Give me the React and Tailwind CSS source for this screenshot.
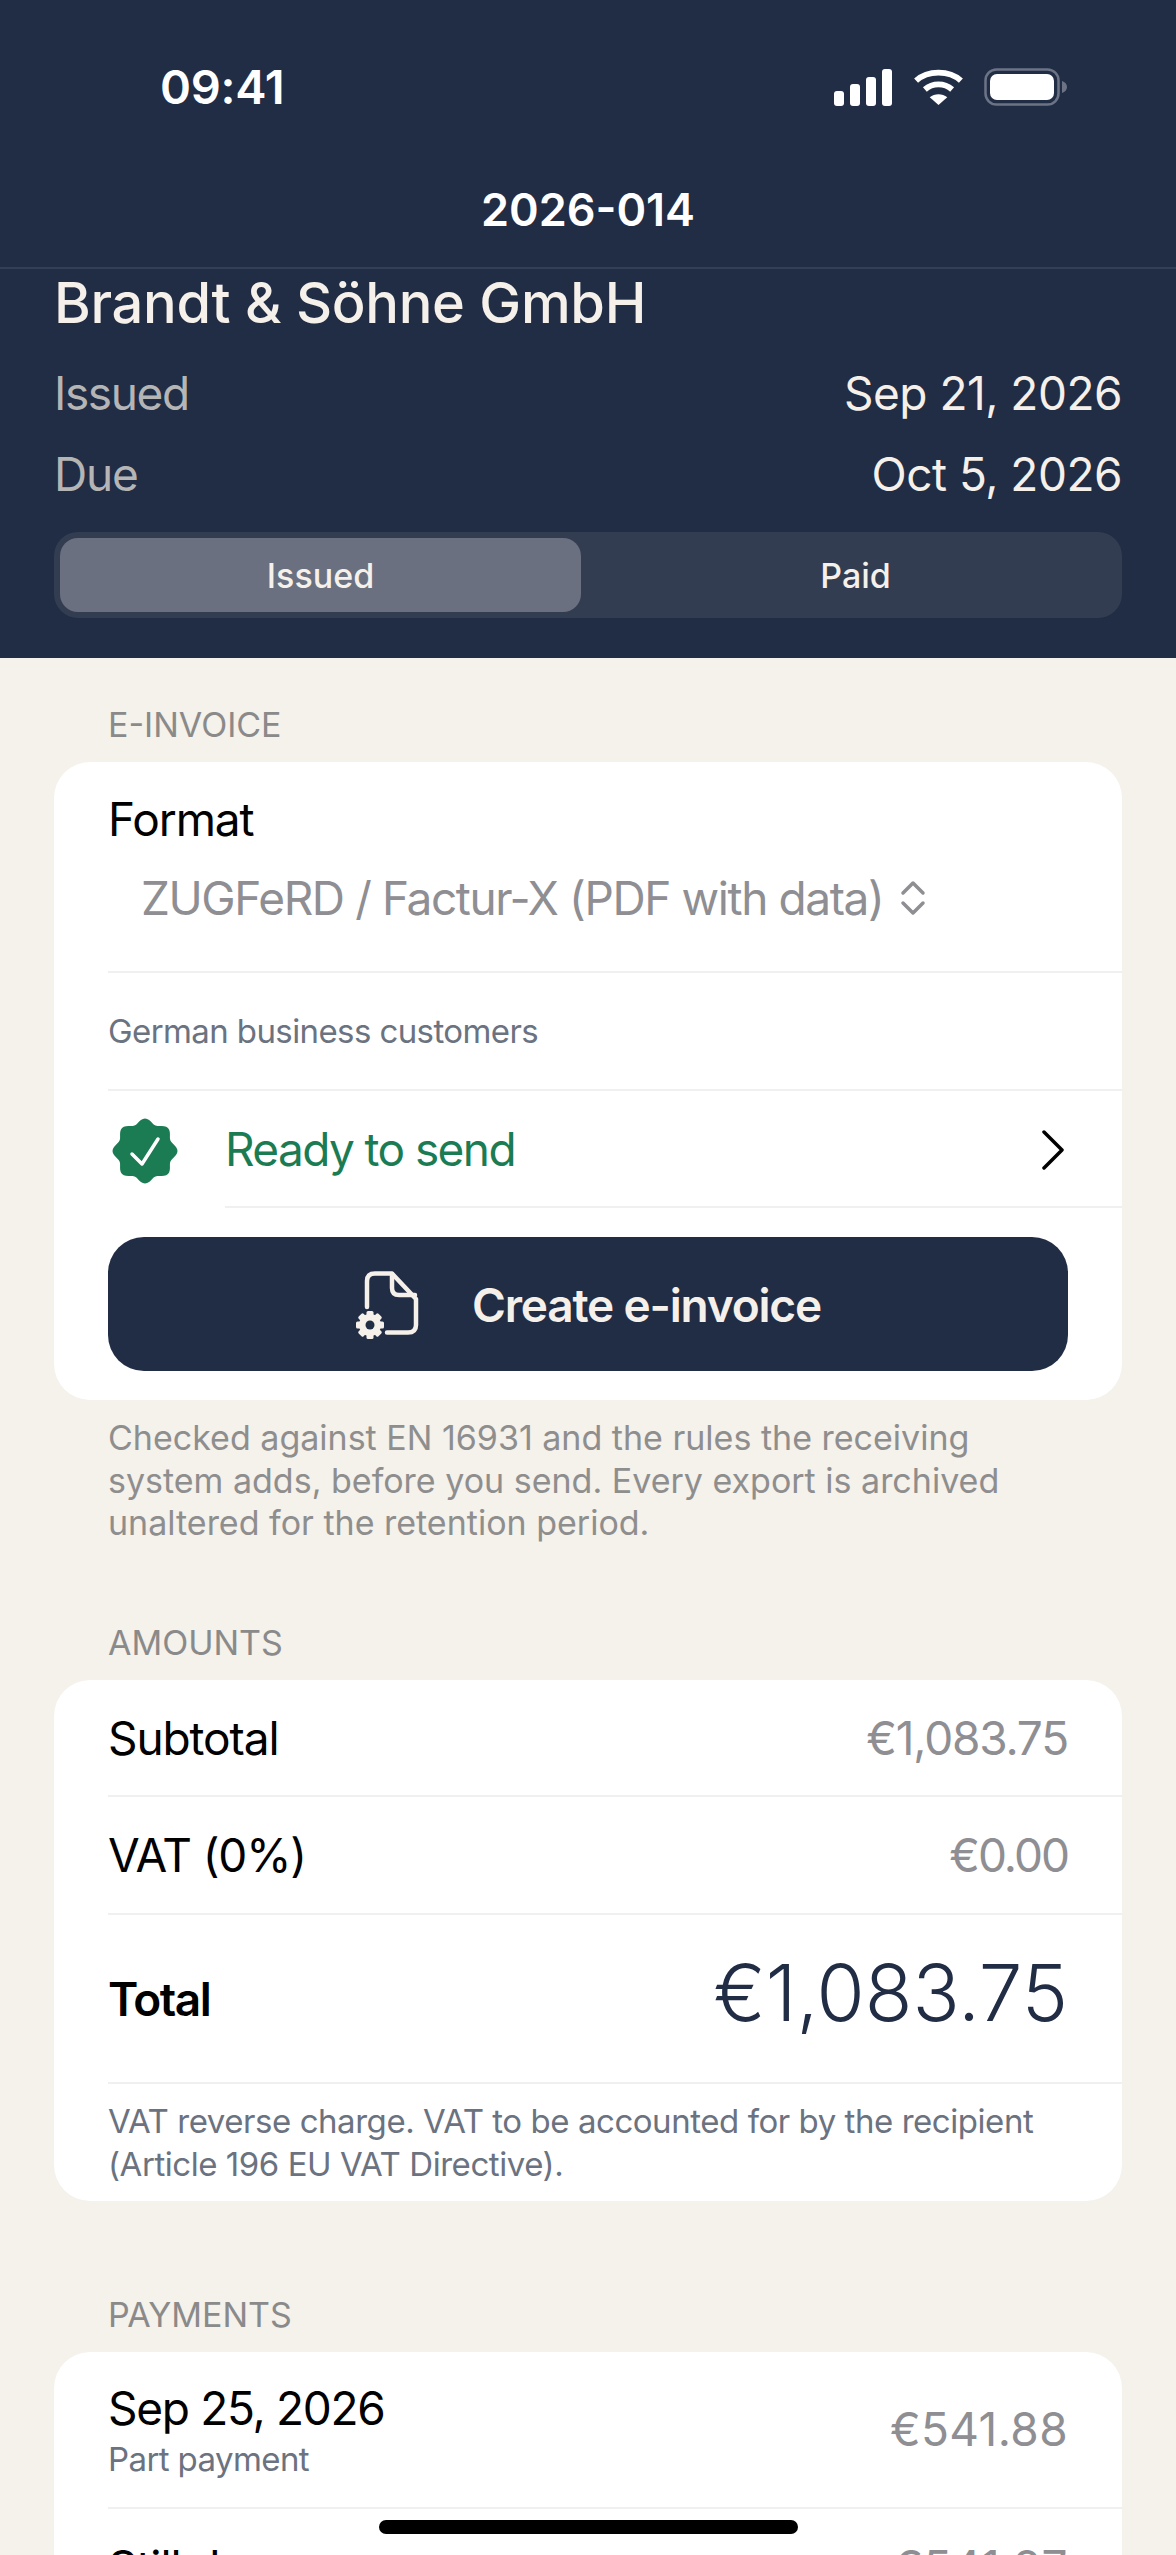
import React from "react";

const scallop = () => {
  const pts = [];
  for (let i = 0; i < 96; i++) {
    const a = (i / 96) * Math.PI * 2;
    const r = 30 + 2.5 * Math.cos(8 * a);
    pts.push(`${(33 + r * Math.sin(a)).toFixed(2)},${(33 - r * Math.cos(a)).toFixed(2)}`);
  }
  return pts.join(" ");
};

const StatusIcons = () => (
  <div className="flex items-center gap-[20px]">
    <svg width="59" height="37" viewBox="0 0 59 37" fill="#fff">
      <rect x="0" y="22" width="10" height="15" rx="3" />
      <rect x="16" y="15" width="10" height="22" rx="3" />
      <rect x="32" y="8" width="10" height="29" rx="3" />
      <rect x="48" y="0" width="10" height="37" rx="3" />
    </svg>
    <svg width="51" height="37" viewBox="0 0 52 38" fill="none">
      <path d="M3 12 C15 1 37 1 49 12" stroke="#fff" strokeWidth="6" />
      <path d="M12 21 C20 14 32 14 40 21" stroke="#fff" strokeWidth="6" />
      <path d="M26 37 L17 29 C22 25 30 25 35 29 Z" fill="#fff" />
    </svg>
    <svg width="84" height="38" viewBox="0 0 84 38" fill="none">
      <rect x="1.5" y="1.5" width="73" height="35" rx="11" stroke="#6b7385" strokeWidth="2.5" />
      <rect x="6" y="6" width="64" height="26" rx="7" fill="#fff" />
      <path d="M78 13 C81 14 83 16 83 19 C83 22 81 24 78 25 Z" fill="#6b7385" />
    </svg>
  </div>
);

const DocGear = () => (
  <svg width="70" height="80" viewBox="0 0 70 80" fill="none" className="shrink-0">
    <path
      d="M18 43 V17 C18 12 21 9.5 26 9.5 H43 L67 35 V61 C67 66 64 68.5 59 68.5 H38"
      stroke="#f5f0ea"
      strokeWidth="4.5"
      strokeLinejoin="round"
      strokeLinecap="round"
    />
    <path
      d="M43 10 V24 C43 28 45 31 50 31 H66"
      stroke="#f5f0ea"
      strokeWidth="4.5"
      strokeLinecap="round"
    />
    <g fill="#f5f0ea">
      {[0, 45, 90, 135, 180, 225, 270, 315].map((deg) => (
        <rect key={deg} x="17.5" y="47" width="7" height="8" rx="1.5" transform={`rotate(${deg} 21 61)`} />
      ))}
      <circle cx="21" cy="61" r="11" />
    </g>
    <circle cx="21" cy="61" r="4.5" fill="#212c45" />
  </svg>
);

const Row = ({ label, value, valueClass, className = "h-[117px]" }) => (
  <div className={`flex items-center justify-between border-b-2 border-[#f0f0f2] pt-[2px] pr-[54px] ${className}`}>
    <span className="text-[46px] tracking-[-1.1px] text-black">{label}</span>
    <span className={`text-[46px] text-[#8e8e93] ${valueClass}`}>{value}</span>
  </div>
);

const SectionLabel = ({ children, className = "" }) => (
  <div className={`mb-[17px] ml-[108px] h-[40px] text-[34px] leading-[40px] text-[#8a8a8a] ${className}`}>
    {children}
  </div>
);

export default function App() {
  return (
    <div className="relative h-[2555px] w-[1176px] overflow-hidden bg-[#f5f1eb] font-['Inter',sans-serif]">
      {/* Header */}
      <div className="h-[658px] bg-[#212c45] text-[#f5f0ea]">
        <div className="flex h-[174px] items-center justify-between pl-[160px] pr-[108px]">
          <span className="text-[47px] font-semibold tracking-[-0.3px] text-white">09:41</span>
          <StatusIcons />
        </div>
        <div className="flex h-[95px] justify-center border-b-2 border-[#343f57] pt-[13px]">
          <span className="text-[45px] leading-[46px] font-semibold text-white">2026-014</span>
        </div>
        <div className="px-[54px]">
          <div className="h-[68px] text-[56px] leading-[68px] font-medium tracking-[-0.3px]">Brandt &amp; Söhne GmbH</div>
          <div className="mt-[16px] flex h-[81px] items-center justify-between text-[46px] tracking-[-0.5px]">
            <span className="tracking-[-1.4px] text-[#b5b5b5]">Issued</span>
            <span>Sep 21, 2026</span>
          </div>
          <div className="flex h-[81px] items-center justify-between text-[46px] tracking-[-0.5px]">
            <span className="tracking-[-1.2px] text-[#b5b5b5]">Due</span>
            <span>Oct 5, 2026</span>
          </div>
          <div className="mt-[17px] flex h-[86px] rounded-[24px] bg-[#333d51] p-[6px] text-[34px] font-medium">
            <div className="flex w-[521px] items-center justify-center rounded-[18px] bg-[#6a7080]">Issued</div>
            <div className="flex flex-1 items-center justify-center pl-[14px]">Paid</div>
          </div>
        </div>
      </div>

      {/* E-invoice */}
      <SectionLabel className="mt-[47px]">E-INVOICE</SectionLabel>
      <div className="mx-[54px] h-[638px] rounded-[36px] bg-white">
        <div className="ml-[54px] h-[211px] border-b-2 border-[#f0f0f2] pt-[28px]">
          <div className="h-[58px] text-[46px] leading-[58px] tracking-[-1.1px] text-black">Format</div>
          <div className="mt-[21px] flex h-[58px] items-center gap-[17px] pl-[33px] text-[46px] tracking-[-1.4px] text-[#8e8e93]">
            <span>ZUGFeRD / Factur-X (PDF with data)</span>
            <svg width="26" height="36" viewBox="0 0 26 36" fill="none" stroke="#8e8e93" strokeWidth="3.5" strokeLinecap="round" strokeLinejoin="round">
              <path d="M3 13 L13 3 L23 13" />
              <path d="M3 23 L13 33 L23 23" />
            </svg>
          </div>
        </div>
        <div className="ml-[54px] flex h-[118px] items-center border-b-2 border-[#f0f0f2] pt-[2px] text-[33px] tracking-[-0.6px] text-[#6b7280]">
          German business customers
        </div>
        <div className="flex h-[117px] pl-[58px]">
          <svg width="66" height="66" viewBox="0 0 66 66" className="mt-[27px] shrink-0">
            <polygon points={scallop()} fill="#1b7c53" />
            <path d="M20 36 L30 46 L46 21" fill="none" stroke="#fff" strokeWidth="3.5" strokeLinecap="round" strokeLinejoin="round" />
          </svg>
          <div className="ml-[47px] flex flex-1 items-center justify-between border-b-2 border-[#f0f0f2] pt-[2px] pr-[58px]">
            <span className="text-[46px] tracking-[-1.6px] text-[#1b7c53]">Ready to send</span>
            <svg width="22" height="40" viewBox="0 0 22 40" fill="none" stroke="#000" strokeWidth="3.5" strokeLinecap="round" strokeLinejoin="round">
              <path d="M2 2 L20 20 L2 38" />
            </svg>
          </div>
        </div>
        <div className="mx-[54px] mt-[29px] flex h-[134px] items-center justify-center gap-[53px] rounded-[36px] bg-[#212c45] pr-[6px]">
          <DocGear />
          <span className="pt-[2px] text-[46px] font-semibold tracking-[-1.2px] text-[#f5f0ea]">Create e-invoice</span>
        </div>
      </div>
      <p className="mx-[108px] mt-[17px] text-[34px] leading-[42.5px] text-[#8e8e8e]">
        Checked against EN 16931 and the rules the receiving
        <br />
        system adds, before you send. Every export is archived
        <br />
        unaltered for the retention period.
      </p>

      {/* Amounts */}
      <SectionLabel className="mt-[78px]">AMOUNTS</SectionLabel>
      <div className="mx-[54px] h-[521px] rounded-[36px] bg-white pl-[54px]">
        <Row label="Subtotal" value="€1,083.75" valueClass="tracking-[-1.2px]" />
        <Row label="VAT (0%)" value="€0.00" valueClass="tracking-[-2px]" className="h-[118px]" />
        <div className="flex h-[169px] items-center justify-between border-b-2 border-[#f0f0f2] pt-[2px] pr-[54px]">
          <span className="text-[46px] font-semibold tracking-[-1.5px] text-black">Total</span>
          <span className="mb-[14px] text-[78px] font-light text-[#212c45]">€1,083.75</span>
        </div>
        <p className="pt-[16px] text-[33px] leading-[43px] tracking-[-0.45px] text-[#6b7280]">
          VAT reverse charge. VAT to be accounted for by the recipient
          <br />
          (Article 196 EU VAT Directive).
        </p>
      </div>

      {/* Payments */}
      <SectionLabel className="mt-[94px]">PAYMENTS</SectionLabel>
      <div className="mx-[54px] h-[400px] rounded-[36px] bg-white pl-[54px]">
        <div className="flex h-[157px] items-center justify-between border-b-2 border-[#f0f0f2] pr-[54px]">
          <div className="pt-[3px]">
            <div className="h-[56px] text-[46px] leading-[56px] tracking-[-1.3px] text-black">Sep 25, 2026</div>
            <div className="h-[46px] text-[33px] leading-[46px] tracking-[-0.6px] text-[#6b7280]">Part payment</div>
          </div>
          <span className="text-[46px] tracking-[0.4px] text-[#8e8e93]">€541.88</span>
        </div>
        <div className="flex h-[117px] items-center justify-between pr-[54px]">
          <span className="text-[46px] tracking-[-1.1px] text-black">Still due</span>
          <span className="text-[46px] tracking-[0.4px] text-[#8e8e93]">€541.87</span>
        </div>
      </div>

      {/* Home indicator */}
      <div className="absolute top-[2520px] left-[379px] h-[14px] w-[419px] rounded-full bg-black" />
    </div>
  );
}
